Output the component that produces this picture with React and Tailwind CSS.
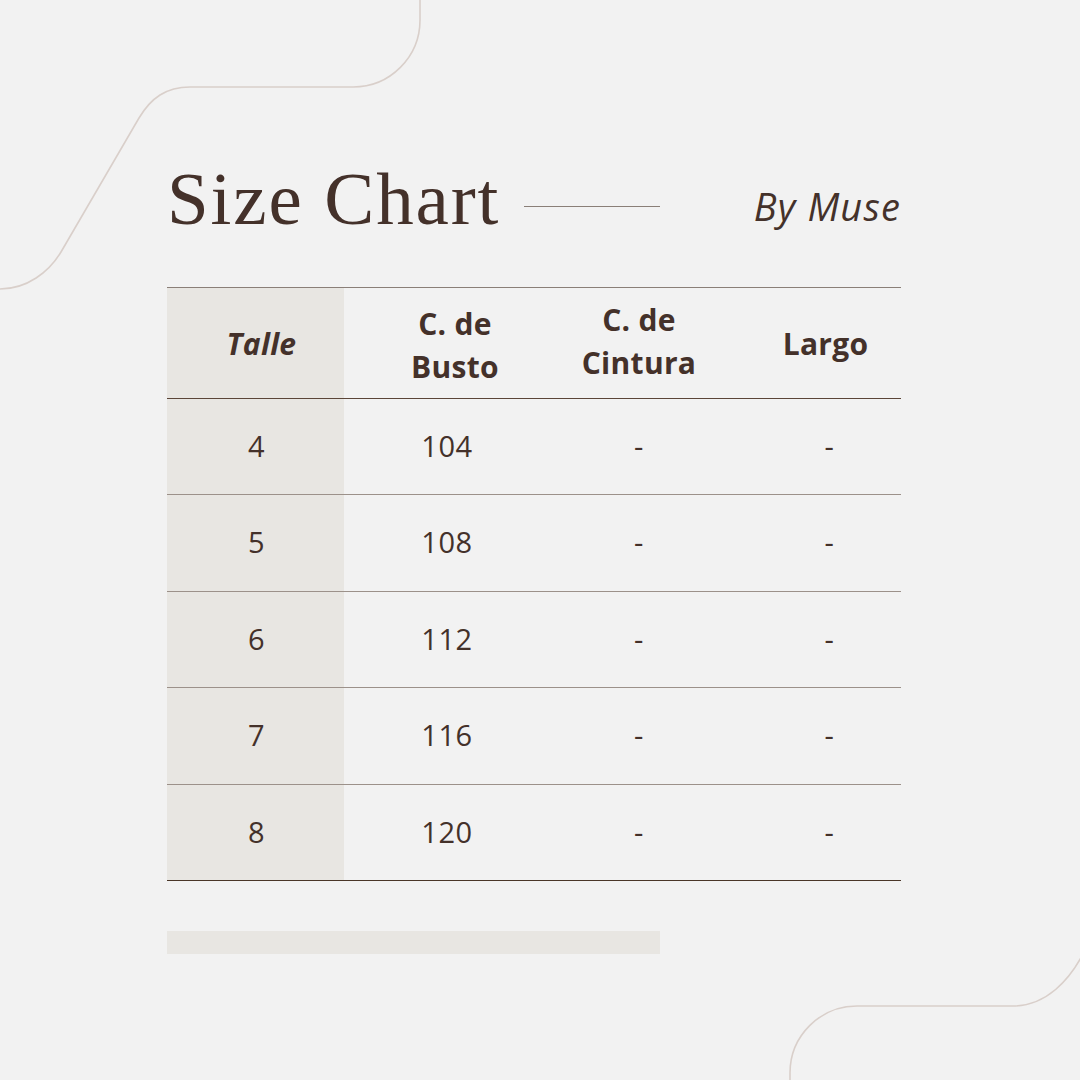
import React from 'react'

const rows = [
    { talle: '4', busto: '104' },
    { talle: '5', busto: '108' },
    { talle: '6', busto: '112' },
    { talle: '7', busto: '116' },
    { talle: '8', busto: '120' },
]

function Curves() {
    return (
        <svg className="absolute inset-0 pointer-events-none" width="1080" height="1080" viewBox="0 0 1080 1080" fill="none">
            <path d="M420 -2 L420 20 A67 67 0 0 1 353 87 L190 87 C166 87 151 98 139 118 L61 252 C49 272 27 289 0 289" stroke="#d9cfca" strokeWidth="1.6" />
            <path d="M1084 952 C1070 980 1046 1006 1013 1006 L857 1006 A67 67 0 0 0 790 1073 L790 1084" stroke="#d9cfca" strokeWidth="1.6" />
        </svg>
    )
}

function SizeChartTable() {
    return (
        <div className="w-[734px] border-t-[1.5px] border-[#8a7f78]">
            <div className="flex h-[111px] border-b-[1.5px] border-[#5b4538] font-bold text-[30px] leading-[43px] tracking-[0.01em]" style={{ fontFamily: '"Open Sans", sans-serif' }}>
                <div className="w-[177px] h-full bg-[#e8e6e2] flex items-center justify-center pl-[12px] italic">Talle</div>
                <div className="w-[206px] h-full flex items-center justify-center text-center pl-[16px] pt-[4px]">C. de<br />Busto</div>
                <div className="w-[178px] h-full flex items-center justify-center text-center pb-[4px]">C. de<br />Cintura</div>
                <div className="w-[173px] h-full flex items-center justify-center pl-[22px]">Largo</div>
            </div>
            {rows.map((row, i) => (
                <div key={row.talle} className={'flex h-[96.4px] border-b-[1.5px] text-[29px] tracking-[0.02em] ' + (i === rows.length - 1 ? 'border-[#4a3628]' : 'border-[#9c918a]')} style={{ fontFamily: '"Open Sans", sans-serif' }}>
                    <div className="w-[177px] h-full bg-[#e8e6e2] flex items-center justify-center pl-[2px] pb-[2px]">{row.talle}</div>
                    <div className="w-[206px] h-full flex items-center justify-center pb-[2px]">{row.busto}</div>
                    <div className="w-[178px] h-full flex items-center justify-center pb-[2px]">-</div>
                    <div className="w-[173px] h-full flex items-center justify-center pl-[30px] pb-[2px]">-</div>
                </div>
            ))}
        </div>
    )
}

export default function App() {
    return (
        <div className="relative w-[1080px] h-[1080px] overflow-hidden bg-[#f2f2f2] text-[#44312a]">
            <Curves />
            <div className="relative pl-[167px] pt-[161px]">
                <div className="flex items-center w-[734px] h-[75px]">
                    <h1 className="text-[75px] leading-none tracking-[0.025em]" style={{ fontFamily: '"Liberation Serif", serif' }}>Size Chart</h1>
                    <div className="ml-[24px] mt-[16px] w-[136px] h-[1.5px] bg-[#8a7f78]"></div>
                    <div className="ml-auto mt-[14px] italic font-normal text-[38px] leading-none tracking-[0.03em]" style={{ fontFamily: '"Open Sans", sans-serif' }}>By Muse</div>
                </div>
                <div className="mt-[51px]">
                    <SizeChartTable />
                </div>
                <div className="mt-[50px] w-[493px] h-[23px] bg-[#e8e6e2]"></div>
            </div>
        </div>
    )
}
